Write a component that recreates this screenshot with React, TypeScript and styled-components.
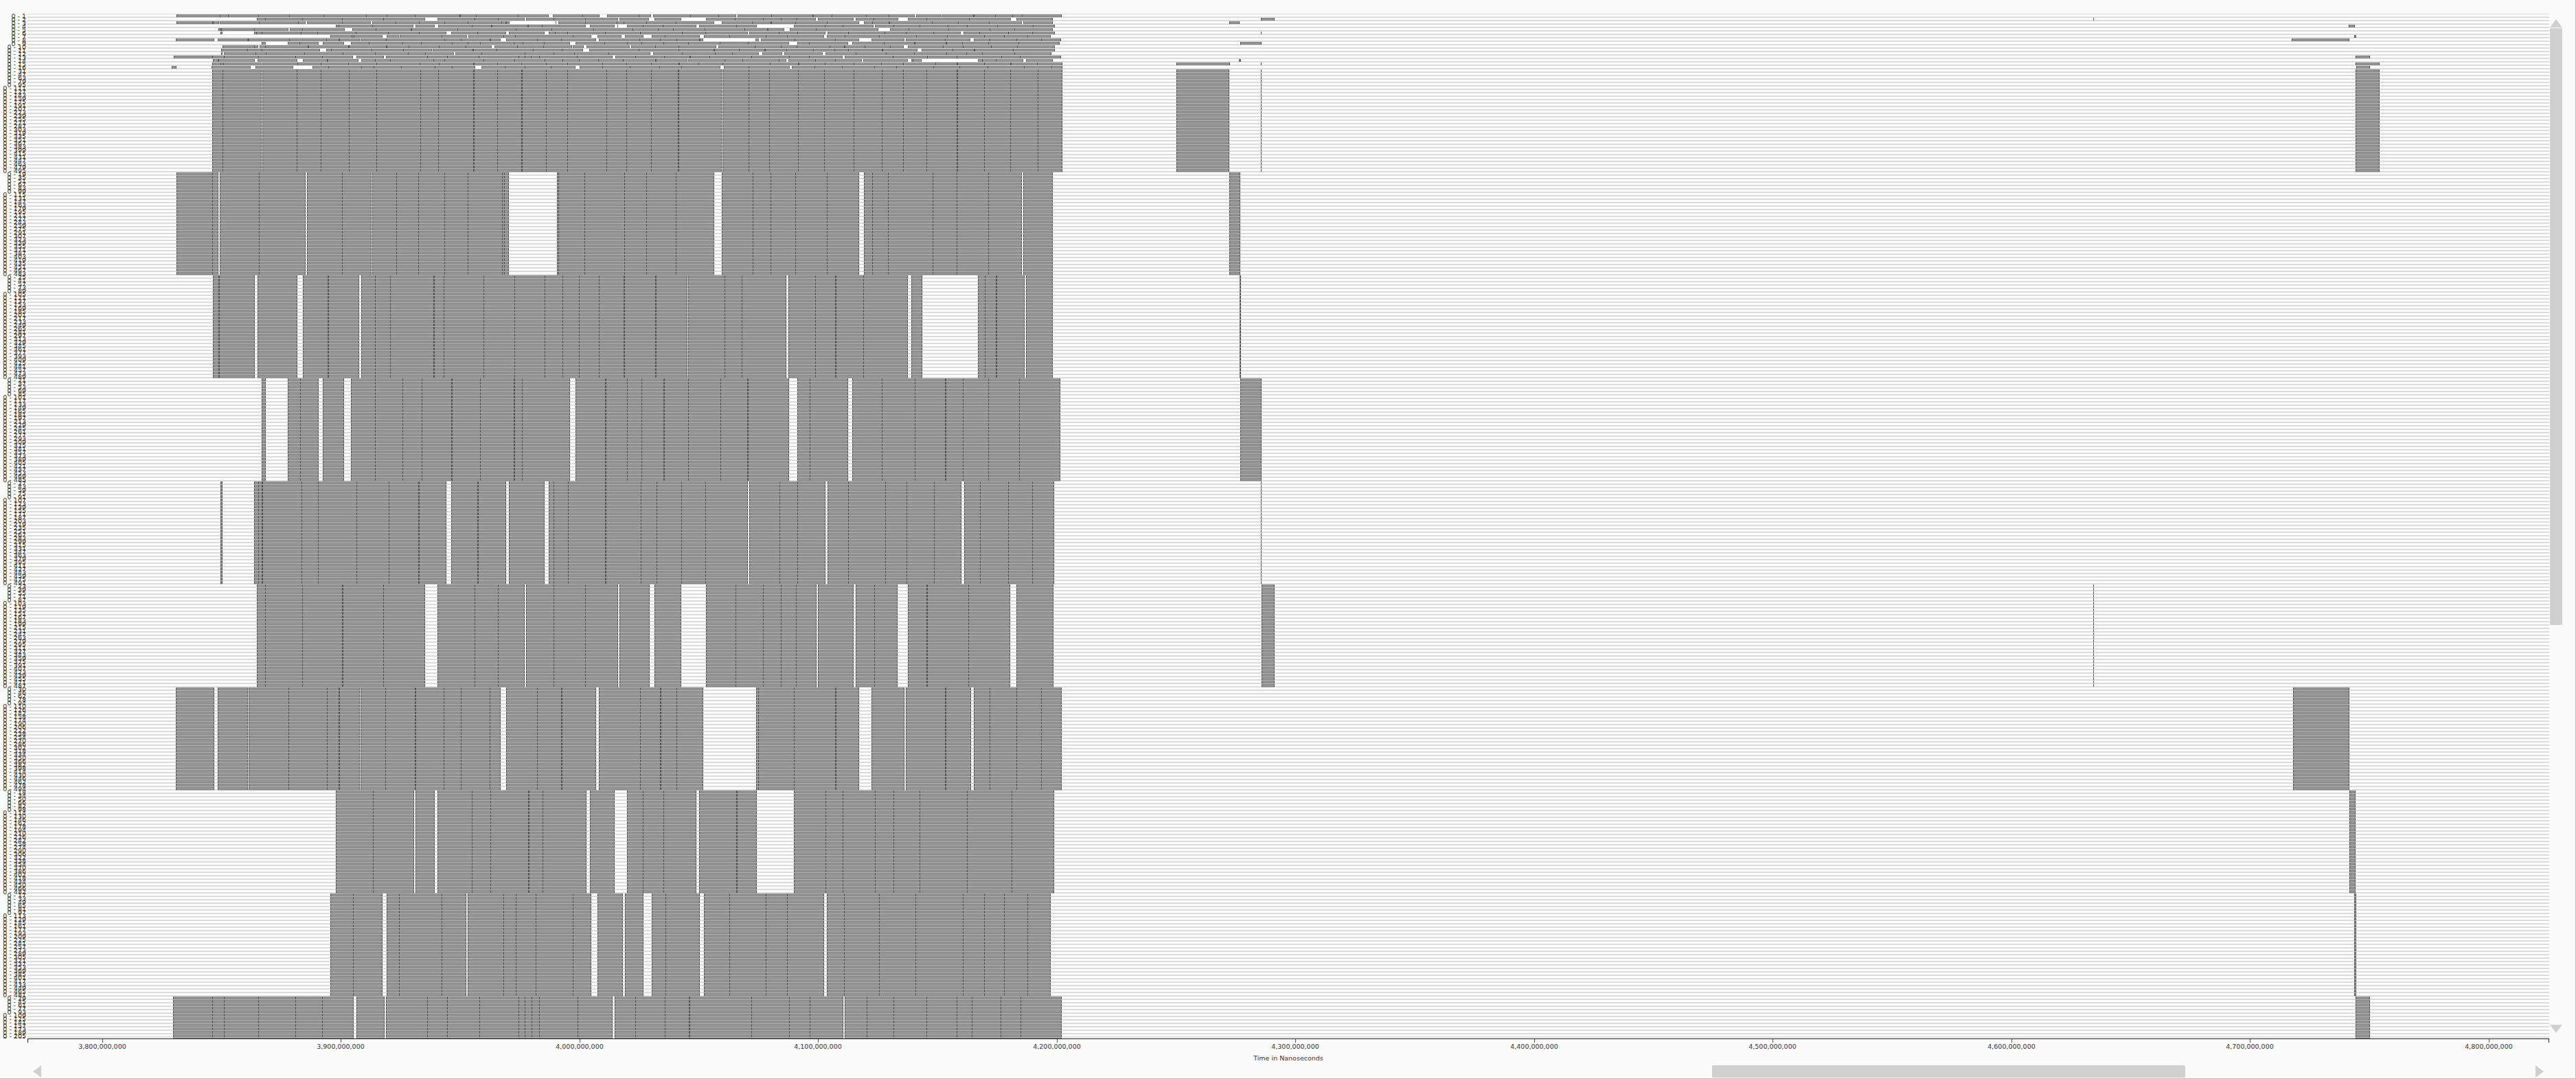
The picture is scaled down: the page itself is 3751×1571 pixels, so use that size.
import React from "react";
import styled, { createGlobalStyle } from "styled-components";

const GlobalStyle = createGlobalStyle`
  html, body {
    margin: 0;
    padding: 0;
    background: #fafafa;
    overflow: hidden;
  }
`;

const Page = styled.div`
  width: 3751px;
  height: 1571px;
  box-sizing: border-box;
  padding-top: 20px;
  display: flex;
  flex-direction: column;
  background: #fafafa;
  border-right: 1px solid #bcbcbc;
  border-bottom: 1px solid #bcbcbc;
  font-family: "DejaVu Sans", sans-serif;
  color: #333;
`;

const ChartRow = styled.div`
  display: flex;
  height: 1492px;
`;

const LabelColumn = styled.div`
  width: 40px;
  height: 1492px;
  overflow: hidden;
  flex: none;
`;

const RowLabel = styled.div`
  height: 5px;
  line-height: 5px;
  font-size: 9.5px;
  text-align: right;
  white-space: nowrap;
  padding-right: 2px;
  position: relative;
  top: 1px;
`;

const Plot = styled.svg`
  display: block;
  flex: none;
`;

const VScroll = styled.div`
  width: 18px;
  margin-left: 1px;
  padding: 8px 0;
  display: flex;
  flex-direction: column;
  align-items: center;
`;

const ArrowUp = styled.div`
  width: 0;
  height: 0;
  border-left: 9px solid transparent;
  border-right: 9px solid transparent;
  border-bottom: 12px solid #d0d0d0;
`;

const ArrowDown = styled.div`
  width: 0;
  height: 0;
  margin-top: auto;
  border-left: 9px solid transparent;
  border-right: 9px solid transparent;
  border-top: 12px solid #d0d0d0;
`;

const VThumb = styled.div`
  width: 18px;
  height: 869px;
  margin-top: 1px;
  background: #d0d0d0;
  border-radius: 2px;
`;

const AxisSvg = styled.svg`
  display: block;
  margin-left: 40px;
`;

const TickLabel = styled.text`
  font-family: "DejaVu Sans", sans-serif;
  font-size: 9.5px;
  fill: #333;
  text-anchor: middle;
`;

const AxisTitle = styled.div`
  width: 3672px;
  margin-left: 40px;
  height: 14px;
  line-height: 14px;
  font-size: 9.5px;
  text-align: center;
`;

const HScroll = styled.div`
  height: 18px;
  margin-top: 3px;
  padding: 0 46px 0 48px;
  display: flex;
  align-items: center;
`;

const ArrowLeft = styled.div`
  width: 0;
  height: 0;
  border-top: 9px solid transparent;
  border-bottom: 9px solid transparent;
  border-right: 12px solid #d0d0d0;
`;

const ArrowRight = styled.div`
  width: 0;
  height: 0;
  margin-left: auto;
  border-top: 9px solid transparent;
  border-bottom: 9px solid transparent;
  border-left: 12px solid #d0d0d0;
`;

const HThumb = styled.div`
  width: 689px;
  height: 18px;
  margin-left: 2433px;
  background: #d0d0d0;
  border-radius: 2px;
`;

const PLOT_X = 40;
const PLOT_W = 3672;
const PLOT_H = 1492;
const ROW_H = 5;

// numbers below were read from crops, so each list keeps its crop scale
const cropBand = (v: number) => Math.round(240 + v / 1.188) - PLOT_X;
const cropRowA = (v: number) => Math.round(240 + v / 2.376) - PLOT_X;
const cropRowB = (v: number) => Math.round(900 + v / 2.376) - PLOT_X;
const pagePx = (v: number) => v - PLOT_X;

type Marks = { ticks: number[]; heavy: number[]; gaps: [number, number][] };

const parseMarks = (src: string, toX: (v: number) => number): Marks => {
  const marks: Marks = { ticks: [], heavy: [], gaps: [] };
  src
    .split(" ")
    .filter(Boolean)
    .forEach((token) => {
      if (token.includes("-")) {
        const [a, b] = token.split("-").map(Number);
        marks.gaps.push([toX(a), toX(b)]);
      } else if (token.endsWith("h")) {
        marks.heavy.push(toX(parseFloat(token)));
      } else {
        marks.ticks.push(toX(Number(token)));
      }
    });
  return marks;
};

const topRows = [
  { row: 0, from: 40, to: 1536, a: "190 219 322 431 549 697 768 866 1020h 1077 1221 1328-1342 1445 1503-1530", b: "72 115-120 250 348 408-413 531 672h 738 858 937 1026-1031 1118-1122 1228h 1305 1365 1396" },
  { row: 1, from: 318, to: 1505, a: "348 476 614 756 900-943 1072 1153 1245-1250 1345 1455", b: "0-5 108-127 218-304 405 502 563 617 684-692 816-822 885 969-1003 1067 1213 1359-1378" },
  { row: 2, from: 40, to: 1505, a: "163h 186 187-190 325 460 487-492 614 713-718 799 878 967 1049 1164 1178h 1192-1352 1355-1361 1453 1563", b: "19 98 200 332-359 464 527h 614 723 834-851 880 936h 1087 1175 1283 1397-1402" },
  { row: 3, from: 592, to: 1510, a: "602 718 860-867 934-946 1063 1128h 1254h 1305 1456-1471 1556-1568", b: "0-31 86 155 270-281 409 480-608 715 778 885-889 953 1044 1141 1207 1312 1435" },
  { row: 4, from: 185, to: 1505, a: "192h 309 428-432 476 622-649 730 850h 1012 1215 1338 1482", b: "49 138 191 300 437 515h 574-594 685 900-941 1005 1143 1285 1372" },
  { row: 5, from: 192, to: 1510, a: "200-309 316 335 471 528 660 772 878 974-991 1081 1180-1190 1314-1328 1349 1393 1524", b: "77 220 302 449-453 557 620 717-724 797 922 996 1091 1185-1196 1250 1350 1433" },
  { row: 6, from: 573, to: 1497, a: "647 653 753-767 810-813 957 1045-1050 1172 1212 1412 1475-1497", b: "13-24 88-116 162 283-297 385 512 585 712-722 783 904 1031 1138 1267 1336 1416" },
  { row: 7, from: 38, to: 1533, a: "170-183 287 288-290 429 559 601h 674-678 764 966 1023 1125h 1161-1181 1288 1372 1492-1501", b: "74 145 202 281h 294-475 486-495 610 752 834-877 990-995 1132 1220-1231 1286 1378 1464" },
  { row: 8, from: 335, to: 1528, a: "350-426 466 532-547 620-644 706 823 887 992 1047 1091 1207 1238 1312 1402-1421 1520", b: "31 80 157 242 352 448 591-620 660 796-811 920 1025h 1133h 1191 1281 1385" },
  { row: 9, from: 200, to: 1510, a: "310 323-327 348 494h 634h 765h 844 949 1041 1130-1141 1220 1310 1408-1412 1449-1459", b: "40-46 129 210 340-347 474 562 618 732 781h 852 941 988-1003 1125 1192 1290 1380" },
  { row: 10, from: 195, to: 1510, a: "285 334 538-558 575 716 825 924-927 1064h 1148 1274 1373 1448-1468", b: "72 208 330h 419 507h 582 675 749 797 912h 1036-1050 1156 1230h 1367" },
  { row: 11, from: 198, to: 1500, a: "198-204 314 350 483 616 726 840 900 1000-1005 1095 1244 1345 1415 1536", b: "111-121 220 334 395 488-499 567-575 707-717 821 927 1023 1136 1205 1260 1372" },
  { row: 12, from: 30, to: 1533, a: "165 205 323 451 545 652-663 759-765 908 977 1087 1224 1244 1267 1296 1426 1548-1558", b: "60 160 246h 317 462 592 660 778-784 951 1069 1172 1325 1390" },
  { row: 13, from: 167, to: 1503, a: "183h 311-321 458-478 560h 671-679 727 780 929 966 1103 1210 1315 1376 1433 1499", b: "17 128h 239-243 369 429 555 581-589 683 752 844-848 1002-1014 1020 1051-1245 1260 1307 1403-1411" },
  { row: 14, from: 164, to: 1538, a: "193 203 335-338 458 540 635 732 882 947 1066h 1150 1232 1319 1393 1513", b: "29 114 208h 277 360 524 623h 714 815 910 986 1098 1171h 1267 1356h 1450" },
  { row: 15, from: 162, to: 1538, a: "297-314 444-511 565 680 723 817 934 993 1073-1096 1176 1245 1336 1420-1436 1514", b: "41 143 219 355-366 451 593-601 680 774 886 963 1091 1181 1278 1404 1499" },
];

// short bars to the right of the main burst, page x coordinates
const sideBars: { row: number; from: number; to: number; ticks?: number[] }[] = [
  { row: 15, from: 250, to: 257 },
  { row: 1, from: 1836, to: 1856 },
  { row: 2, from: 1790, to: 1805 },
  { row: 5, from: 1836, to: 1837 },
  { row: 8, from: 1806, to: 1837 },
  { row: 13, from: 1804, to: 1807 },
  { row: 14, from: 1713, to: 1791, ticks: [1836] },
  { row: 1, from: 3048, to: 3049 },
  { row: 3, from: 3420, to: 3429 },
  { row: 6, from: 3428, to: 3431 },
  { row: 7, from: 3337, to: 3421 },
  { row: 12, from: 3430, to: 3451 },
  { row: 14, from: 3430, to: 3465 },
  { row: 15, from: 3431, to: 3451, ticks: [3450] },
];

const bands = [
  {
    labelStart: 31, rows: 30, from: 82, to: 1553,
    marks: "100 168-169 228 270 318 366 442 473 533h 575 616h 659 696 764 798 841 888h 964-965 1010 1046 1095 1141 1192 1240 1277 1317 1370h 1417 1462 1510",
    extra: [{ from: 1713, to: 1790 }, { from: 3430, to: 3465 }], extraTicks: [1836],
  },
  {
    labelStart: 19, rows: 30, from: 20, to: 1536,
    marks: "82 93-95 163 244-246 307 357-359 400 438 484 524 583 587 595-678 681 726 795 833 884 950-963 1017 1048 1091 1145 1201-1209 1224 1251 1328 1370 1424 1483-1485",
    extra: [{ from: 1790, to: 1806 }], extraTicks: [],
  },
  {
    labelStart: 25, rows: 30, from: 83, to: 1536,
    marks: "93h 156-160 229-239 281h 336-340 364 390 465h 482 551 605 657 688 716 751 793h 848h 904-905 968 998 1075-1079 1125 1160h 1208 1285-1291 1310-1407 1418 1438h 1487-1490",
    extra: [{ from: 1805, to: 1807 }], extraTicks: [],
  },
  {
    labelStart: 21, rows: 30, from: 168, to: 1549,
    marks: "175-213 234 266-273 310-322 363 411 444 495h 545 604h 618 701-710 761h 800 824 863h 905 961 1008h 1080-1094 1115 1182-1189 1240 1297 1350h 1380 1424 1478",
    extra: [{ from: 1806, to: 1837 }], extraTicks: [],
  },
  {
    labelStart: 27, rows: 30, from: 155, to: 1539,
    marks: "162 168h 236 265 331 387 438h 487-495 541h 590-595 657-664 672 697 762h 823 851 893 935 1009-1011 1063 1094 1143-1146 1182 1246 1283 1330 1378-1383 1410 1459 1500",
    extra: [{ from: 321, to: 324 }], extraTicks: [1836],
  },
  {
    labelStart: 23, rows: 30, from: 159, to: 1537,
    marks: "174 238 307h 378 450-472 536 576 622-625 673 727 784-787 839-847 893-936 987 1035 1066 1092 1127-1130 1192-1195 1227 1268-1285 1318h 1390 1463-1473",
    extra: [{ from: 1837, to: 1856 }], extraTicks: [3048],
  },
  {
    labelStart: 30, rows: 30, from: 19, to: 1551,
    marks: "86-91 144-145 214 280 300h 337-339 381 433h 482 512 562 581-590 644 686h 746-751 822 857h 885 931-1023 1027 1088 1160h 1201-1222 1279-1282 1350h 1395-1399 1427 1473 1516",
    extra: [{ from: 3339, to: 3421 }], extraTicks: [],
  },
  {
    labelStart: 18, rows: 30, from: 296, to: 1539,
    marks: "360 431-434 467-472 531 563 628h 653 729-735 778-799 827 862 920-924 989h 1024-1088 1143 1173 1228 1261 1306 1388 1465",
    extra: [{ from: 3421, to: 3430 }], extraTicks: [],
  },
  {
    labelStart: 17, rows: 30, from: 286, to: 1532,
    marks: "325 377-384 405 479 522-524 586 607 642 706 738-748 792-796 828-842 866 925-932 977 1040 1076 1141-1145 1175 1236 1298 1380 1417 1452 1492",
    extra: [{ from: 3428, to: 3431 }], extraTicks: [],
  },
  {
    labelStart: 29, rows: 13, from: 14, to: 1551,
    marks: "82 102 162 226 272 327-331 380-382 454 488 544 612 622 634 647 714 774-778 814 865 907h 1015 1080 1115 1174-1176 1214 1260 1318 1370 1396 1446 1480",
    extra: [{ from: 3430, to: 3451 }], extraTicks: [],
  },
];

const labels: string[] = [
  ...Array.from({ length: 16 }, (_, i) => `0 - ${i + 1}`),
  ...bands.flatMap((b) =>
    Array.from({ length: b.rows }, (_, i) => `0 - ${b.labelStart + i * 16}`)
  ),
];

const axisTicks = Array.from({ length: 11 }, (_, i) => ({
  x: Math.round(148.5 + i * 347.5) - PLOT_X,
  label: `${3800 + i * 100},000,000`.replace(/^(\d)(\d{3})/, "$1,$2"),
}));

const RowBar = ({ y, x0, x1, marks }: { y: number; x0: number; x1: number; marks?: Marks }) => (
  <g>
    <rect x={x0} y={y} width={x1 - x0} height={4} fill="url(#barFill)" />
    {marks?.gaps.map(([a, b]) => (
      <g key={a}>
        <rect x={a} y={y} width={Math.max(b - a, 1)} height={4} fill="#fff" />
        <rect x={a - 1} y={y} width={1} height={4} fill="#666" />
        <rect x={b} y={y} width={1} height={4} fill="#666" />
      </g>
    ))}
    {marks?.ticks.map((t) => <rect key={t} x={t} y={y} width={1} height={4} fill="#555" />)}
    {marks?.heavy.map((t) => <rect key={t} x={t} y={y} width={2} height={4} fill="#555" />)}
    <rect x={x0} y={y} width={1} height={4} fill="#555" />
    <rect x={x1 - 1} y={y} width={1} height={4} fill="#555" />
  </g>
);

const BandBlock = ({ y, h, x0, x1, marks }: { y: number; h: number; x0: number; x1: number; marks?: Marks }) => (
  <g>
    <rect x={x0} y={y} width={x1 - x0} height={h} fill="url(#barFill)" />
    {marks?.gaps.map(([a, b]) => (
      <g key={a}>
        <rect x={a} y={y} width={Math.max(b - a, 1)} height={h} fill="url(#stripes)" />
        <rect x={a - 1} y={y} width={1} height={h} fill="url(#tickFill)" />
        <rect x={b} y={y} width={1} height={h} fill="url(#tickFill)" />
      </g>
    ))}
    {marks?.ticks.map((t) => <rect key={t} x={t} y={y} width={1} height={h} fill="url(#tickFill)" />)}
    {marks?.heavy.map((t) => <rect key={t} x={t} y={y} width={2} height={h} fill="url(#tickFill)" />)}
    <rect x={x0} y={y} width={1} height={h} fill="url(#tickFill)" />
    <rect x={x1 - 1} y={y} width={1} height={h} fill="url(#tickFill)" />
  </g>
);

const TimelinePlot = () => {
  let rowCursor = 16;
  return (
    <Plot width={PLOT_W} height={PLOT_H} shapeRendering="crispEdges">
      <defs>
        <pattern id="stripes" width="5" height="5" patternUnits="userSpaceOnUse">
          <rect width="5" height="5" fill="#fcfcfc" />
          <rect width="5" height="1" fill="#dcdcdc" />
          <rect y="4" width="5" height="1" fill="#dcdcdc" />
        </pattern>
        <pattern id="barFill" width="5" height="5" patternUnits="userSpaceOnUse">
          <rect width="5" height="5" fill="#969696" />
          <rect width="5" height="1" fill="#b8b8b8" />
          <rect y="1" width="5" height="1" fill="#858585" />
          <rect y="4" width="5" height="1" fill="#858585" />
        </pattern>
        <pattern id="tickFill" width="5" height="5" patternUnits="userSpaceOnUse">
          <rect y="1" width="5" height="4" fill="#555" />
        </pattern>
      </defs>
      <rect width={PLOT_W} height={PLOT_H} fill="url(#stripes)" />

      {topRows.map((r) => {
        const a = parseMarks(r.a, cropRowA);
        const b = parseMarks(r.b, cropRowB);
        const marks: Marks = {
          ticks: [...a.ticks, ...b.ticks],
          heavy: [...a.heavy, ...b.heavy],
          gaps: [...a.gaps, ...b.gaps],
        };
        return (
          <RowBar
            key={r.row}
            y={1 + r.row * ROW_H}
            x0={cropRowA(r.from)}
            x1={cropRowB(r.to)}
            marks={marks}
          />
        );
      })}

      {sideBars.map((s) => (
        <RowBar
          key={`${s.row}-${s.from}`}
          y={1 + s.row * ROW_H}
          x0={pagePx(s.from)}
          x1={pagePx(s.to)}
          marks={{ ticks: (s.ticks ?? []).map(pagePx), heavy: [], gaps: [] }}
        />
      ))}

      {bands.map((b) => {
        const y = 1 + rowCursor * ROW_H;
        const h = Math.min(b.rows * ROW_H, PLOT_H - y);
        rowCursor += b.rows;
        return (
          <g key={b.labelStart}>
            <BandBlock
              y={y}
              h={h}
              x0={cropBand(b.from)}
              x1={cropBand(b.to)}
              marks={parseMarks(b.marks, cropBand)}
            />
            {b.extra.map((e) => (
              <BandBlock key={e.from} y={y} h={h} x0={pagePx(e.from)} x1={pagePx(e.to)} />
            ))}
            {b.extraTicks.map((t) => (
              <rect key={t} x={pagePx(t)} y={y} width={1} height={h} fill="url(#tickFill)" />
            ))}
          </g>
        );
      })}
    </Plot>
  );
};

const TimeAxis = () => (
  <AxisSvg width={PLOT_W} height={22}>
    <rect width={PLOT_W} height={1} fill="#222" shapeRendering="crispEdges" />
    <rect width={1} height={6} fill="#222" shapeRendering="crispEdges" />
    <rect x={PLOT_W - 1} width={1} height={6} fill="#222" shapeRendering="crispEdges" />
    {axisTicks.map((t) => (
      <g key={t.x}>
        <rect x={t.x} y={1} width={1} height={5} fill="#555" shapeRendering="crispEdges" />
        <TickLabel x={t.x} y={15}>
          {t.label}
        </TickLabel>
      </g>
    ))}
  </AxisSvg>
);

const App: React.FC = () => {
  return (
    <Page>
      <GlobalStyle />
      <ChartRow>
        <LabelColumn>
          {labels.map((text, i) => (
            <RowLabel key={i}>{text}</RowLabel>
          ))}
        </LabelColumn>
        <TimelinePlot />
        <VScroll>
          <ArrowUp />
          <VThumb />
          <ArrowDown />
        </VScroll>
      </ChartRow>
      <TimeAxis />
      <AxisTitle>Time in Nanoseconds</AxisTitle>
      <HScroll>
        <ArrowLeft />
        <HThumb />
        <ArrowRight />
      </HScroll>
    </Page>
  );
};

export default App;
